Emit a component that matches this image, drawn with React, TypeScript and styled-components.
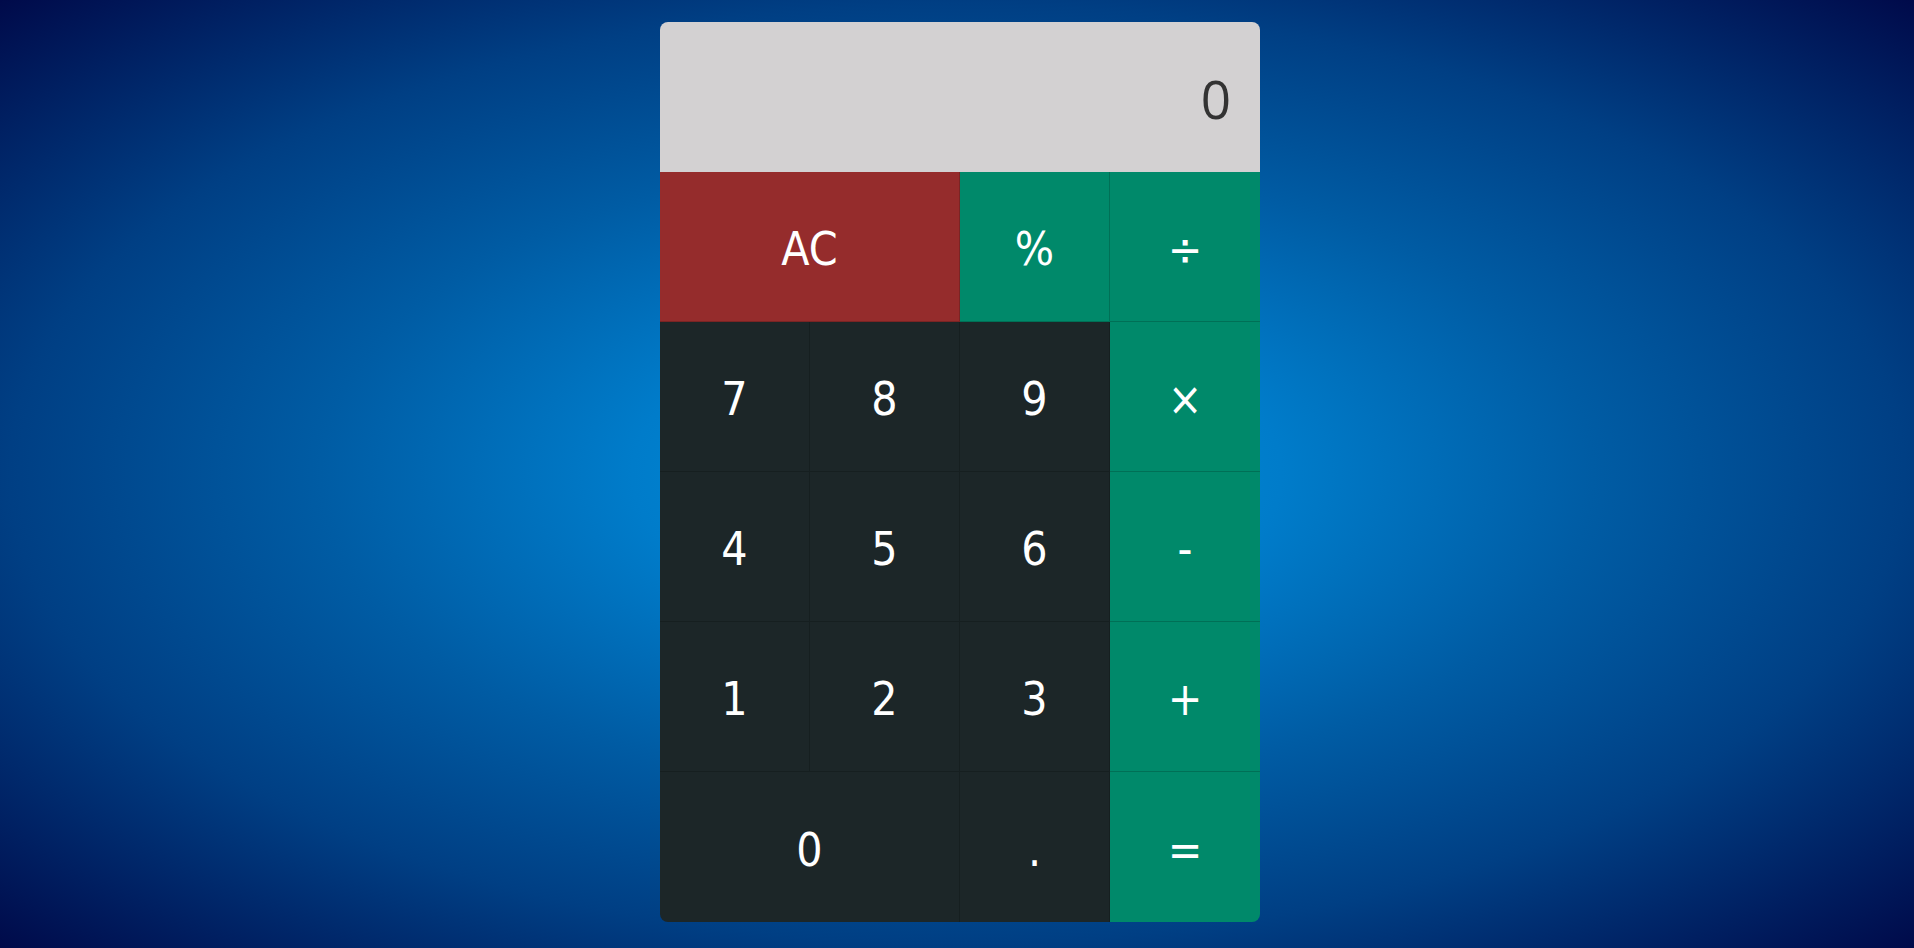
import React from "react";
import styled, { createGlobalStyle } from "styled-components";

const GlobalStyle = createGlobalStyle`
  html, body {
    margin: 0;
    padding: 0;
    height: 100%;
  }
  body {
    background: radial-gradient(ellipse at center, #0094de 0%, #007cca 24%, #005ca4 47%, #003f84 70%, #000a4a 100%);
    font-family: "DejaVu Sans Condensed", "DejaVu Sans", sans-serif;
  }
  #root {
    height: 100%;
  }
`;

const Page = styled.main`
  height: 948px;
  display: flex;
  justify-content: center;
  align-items: center;
  padding: 0 0 4px 6px;
  box-sizing: border-box;
`;

const Calculator = styled.div`
  width: 600px;
  border-radius: 8px;
  overflow: hidden;
  display: flex;
  flex-direction: column;
`;

const Display = styled.div`
  height: 150px;
  background: #d3d1d2;
  color: #333333;
  font-family: "Open Sans", sans-serif;
  font-size: 53px;
  display: flex;
  align-items: center;
  justify-content: flex-end;
  padding: 2px 29px 0;
  box-sizing: border-box;
`;

const Keys = styled.div`
  display: grid;
  grid-template-columns: repeat(4, 150px);
  grid-auto-rows: 150px;
`;

type Variant = "num" | "op" | "clear";

const bg: Record<Variant, string> = {
  num: "#1c2628",
  op: "#00896a",
  clear: "#952c2c",
};

const Key = styled.button<{ $variant: Variant; $span?: number; $lastCol?: boolean; $lastRow?: boolean }>`
  grid-column: span ${(p) => p.$span ?? 1};
  background: ${(p) => bg[p.$variant]};
  color: #ffffff;
  border: none;
  border-right: ${(p) => (p.$lastCol ? "none" : "1px solid rgba(0,0,0,0.18)")};
  border-bottom: ${(p) => (p.$lastRow ? "none" : "1px solid rgba(0,0,0,0.18)")};
  box-sizing: border-box;
  margin: 0;
  padding: 5px 0 0;
  font-family: "DejaVu Sans Condensed", "DejaVu Sans", sans-serif;
  font-size: 46px;
  display: flex;
  align-items: center;
  justify-content: center;
  cursor: pointer;
`;

type K = { label: string; variant: Variant; span?: number; lastCol?: boolean; lastRow?: boolean };

const keys: K[] = [
  { label: "AC", variant: "clear", span: 2 },
  { label: "%", variant: "op" },
  { label: "÷", variant: "op", lastCol: true },
  { label: "7", variant: "num" },
  { label: "8", variant: "num" },
  { label: "9", variant: "num" },
  { label: "×", variant: "op", lastCol: true },
  { label: "4", variant: "num" },
  { label: "5", variant: "num" },
  { label: "6", variant: "num" },
  { label: "-", variant: "op", lastCol: true },
  { label: "1", variant: "num" },
  { label: "2", variant: "num" },
  { label: "3", variant: "num" },
  { label: "+", variant: "op", lastCol: true },
  { label: "0", variant: "num", span: 2, lastRow: true },
  { label: ".", variant: "num", lastRow: true },
  { label: "=", variant: "op", lastCol: true, lastRow: true },
];

export default function App() {
  return (
    <>
      <GlobalStyle />
      <Page>
        <Calculator>
          <Display>0</Display>
          <Keys>
            {keys.map((k) => (
              <Key
                key={k.label}
                $variant={k.variant}
                $span={k.span}
                $lastCol={k.lastCol}
                $lastRow={k.lastRow}
              >
                {k.label}
              </Key>
            ))}
          </Keys>
        </Calculator>
      </Page>
    </>
  );
}
